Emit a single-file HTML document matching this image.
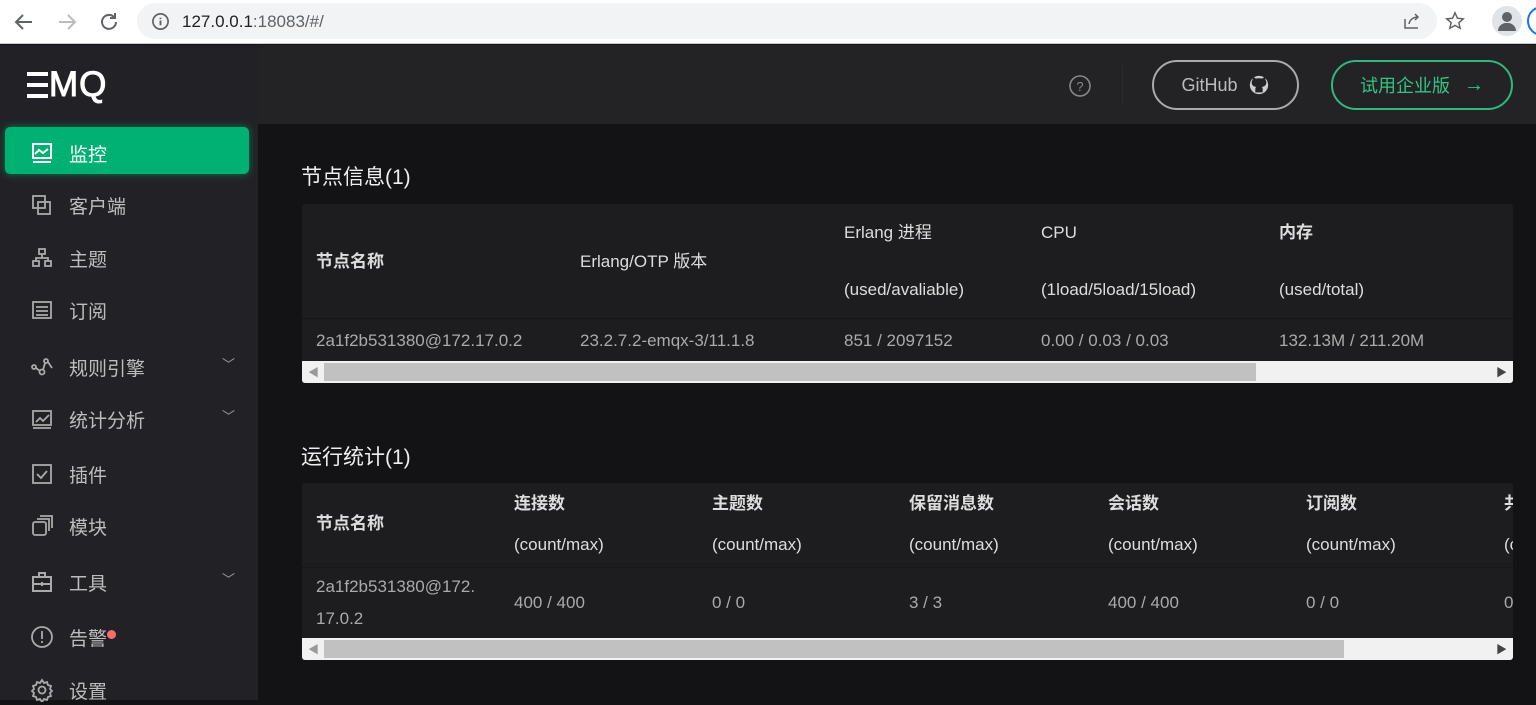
<!DOCTYPE html>
<html><head><meta charset="utf-8"><style>
*{margin:0;padding:0;box-sizing:border-box}
body{width:1536px;height:700px;overflow:hidden;background:#131315;font-family:"Liberation Sans","Noto Sans CJK SC",sans-serif;position:relative}
.chrome{position:absolute;left:0;top:0;width:1536px;height:44px;background:#fff;border-bottom:1px solid #ccc}
.url{position:absolute;left:137px;top:3px;width:1300px;height:36px;border-radius:18px;background:#f1f3f4}
.url span{position:absolute;left:45px;top:9px;font-size:17px;color:#202124}
.url span i{font-style:normal;color:#5f6368}
.side{position:absolute;left:0;top:45px;width:258px;height:655px;background:#222226}
.head{position:absolute;left:258px;top:45px;width:1278px;height:79px;background:#232326}
.item{position:absolute;left:30px;height:30px;font-size:19px;color:#bdbdbd;display:flex;align-items:center}
.item .ic{width:24px;height:24px;margin-right:15px;display:inline-block}
.item .ar{position:absolute;left:192px;top:2px;color:#999;font-size:13px}
.active{position:absolute;left:5px;top:127px;width:244px;height:47px;background:#00b173;border-radius:5px;box-shadow:0 0 8px #0a7a4f}
h3{position:absolute;left:301px;font-size:21px;font-weight:normal;color:#eee}
.tbl{position:absolute;left:302px;width:1211px;background:#1d1d1f;border-radius:3px;overflow:hidden}
.t,.th,.thn{position:absolute;font-size:17px;line-height:20px;white-space:nowrap}
.t{color:#aaa}
.th{color:#ddd;font-weight:bold}
.thn{color:#ddd}
.sb{position:absolute;left:0;width:1211px;height:22px;background:#f1f1f1}
.sb .th2{position:absolute;left:22px;top:2px;height:18px;background:#c1c1c1}
.btn{position:absolute;top:60px;height:50px;border-radius:25px;font-size:18px;display:flex;align-items:center;justify-content:center}
</style></head><body>
<div class="chrome">
<svg style="position:absolute;left:12px;top:10px" width="24" height="24" viewBox="0 0 24 24"><path d="M20 12H5M11 5l-7 7 7 7" stroke="#5f6368" stroke-width="2" fill="none"/></svg>
<svg style="position:absolute;left:55px;top:10px" width="24" height="24" viewBox="0 0 24 24"><path d="M4 12h15M13 5l7 7-7 7" stroke="#bbb" stroke-width="2" fill="none"/></svg>
<svg style="position:absolute;left:97px;top:10px" width="24" height="24" viewBox="0 0 24 24"><path d="M19 12a7 7 0 1 1-2-5M18 3v5h-5" stroke="#5f6368" stroke-width="2" fill="none"/></svg>
<div class="url"><svg style="position:absolute;left:14px;top:9px" width="19" height="19" viewBox="0 0 20 20"><circle cx="10" cy="10" r="8" stroke="#5f6368" stroke-width="1.8" fill="none"/><path d="M10 9v5M10 6v1.5" stroke="#5f6368" stroke-width="2"/></svg><span>127.0.0.1<i>:18083/#/</i></span>
<svg style="position:absolute;left:1265px;top:8px" width="20" height="20" viewBox="0 0 20 20"><path d="M3 8v9h13M7 13c1-5 5-7 9-7M13 3l3 3-3 3" stroke="#5f6368" stroke-width="1.5" fill="none"/></svg>
<svg style="position:absolute;left:1307px;top:7px" width="22" height="22" viewBox="0 0 24 24"><path d="M12 3l2.7 6 6.3.6-4.8 4.2 1.4 6.2L12 16.8 6.4 20l1.4-6.2L3 9.6 9.3 9z" stroke="#5f6368" stroke-width="1.6" fill="none"/></svg>
</div>
<div style="position:absolute;left:1492px;top:6px;width:30px;height:30px;border-radius:50%;background:#e0e3e7"><div style="position:absolute;left:10px;top:6px;width:10px;height:10px;border-radius:50%;background:#5f6368"></div><div style="position:absolute;left:6px;top:17px;width:18px;height:8px;border-radius:8px 8px 0 0;background:#5f6368"></div></div>
<div style="position:absolute;left:1527px;top:6px;width:30px;height:30px;border-radius:50%;border:2px solid #1a73e8"></div>
</div>
<div class="side"></div>
<div style="position:absolute;left:27px;top:72px;width:21px;height:26px;background:linear-gradient(#fff 0 4px,transparent 4px 11px,#fff 11px 15px,transparent 15px 22px,#fff 22px 26px)"></div>
<div style="position:absolute;left:49px;top:67px;color:#fff;font-size:35px;line-height:36px;font-weight:normal;letter-spacing:1px;-webkit-text-stroke:1px #fff">MQ</div>
<div class="active"></div>
<div class="item" style="top:138px;color:#fff"><svg class="ic" viewBox="0 0 24 24"><rect x="3" y="3" width="18" height="14" stroke="#fff" stroke-width="2" fill="none"/><path d="M5 13l4-4 4 3 5-4M3 21h18" stroke="#fff" stroke-width="2" fill="none"/></svg>监控</div>
<div class="item" style="top:190px"><svg class="ic" viewBox="0 0 24 24" fill="none" stroke="#aaa" stroke-width="1.8"><rect x="3" y="3" width="12" height="12"/><rect x="8" y="9" width="12" height="12"/></svg>客户端</div>
<div class="item" style="top:243px"><svg class="ic" viewBox="0 0 24 24" fill="none" stroke="#aaa" stroke-width="1.8"><rect x="9" y="3" width="6" height="5"/><rect x="3" y="15" width="6" height="5"/><rect x="15" y="15" width="6" height="5"/><path d="M12 8v4M6 15v-3h12v3"/></svg>主题</div>
<div class="item" style="top:295px"><svg class="ic" viewBox="0 0 24 24" fill="none" stroke="#aaa" stroke-width="1.8"><rect x="3" y="4" width="18" height="16"/><path d="M6 9h12M6 13h12M6 17h12"/></svg>订阅</div>
<div class="item" style="top:352px"><svg class="ic" viewBox="0 0 24 24" fill="none" stroke="#aaa" stroke-width="1.8"><circle cx="4" cy="12" r="2"/><circle cx="12" cy="17" r="2.5"/><circle cx="16" cy="6" r="2"/><path d="M6 13l4 3M13 15l2-7M18 7l4 6"/></svg>规则引擎<span class="ar">﹀</span></div>
<div class="item" style="top:404px"><svg class="ic" viewBox="0 0 24 24" fill="none" stroke="#aaa" stroke-width="1.8"><path d="M3 18V4h18v14zM3 21h18M6 15l4-4 3 3 6-6"/></svg>统计分析<span class="ar">﹀</span></div>
<div class="item" style="top:459px"><svg class="ic" viewBox="0 0 24 24" fill="none" stroke="#aaa" stroke-width="1.8"><rect x="3" y="3" width="18" height="18"/><path d="M7 12l4 4 6-7"/></svg>插件</div>
<div class="item" style="top:511px"><svg class="ic" viewBox="0 0 24 24" fill="none" stroke="#aaa" stroke-width="1.8"><rect x="3" y="8" width="13" height="13" rx="2"/><path d="M7 5h12v12M10 2h12v12"/></svg>模块</div>
<div class="item" style="top:567px"><svg class="ic" viewBox="0 0 24 24" fill="none" stroke="#aaa" stroke-width="2"><rect x="3" y="7" width="18" height="14"/><path d="M9 7V3h6v4M3 14h18M12 12v4"/></svg>工具<span class="ar">﹀</span></div>
<div class="item" style="top:622px"><svg class="ic" viewBox="0 0 24 24" fill="none" stroke="#aaa" stroke-width="1.8"><circle cx="12" cy="12" r="10"/><path d="M12 6v8M12 16v2"/></svg>告警<span style="width:9px;height:9px;border-radius:50%;background:#f56c6c;margin-top:-6px"></span></div>
<div class="item" style="top:675px"><svg class="ic" viewBox="0 0 24 24" fill="none" stroke="#aaa" stroke-width="1.8"><circle cx="12" cy="12" r="3.5"/><path d="M12 2l2 3 3-1 1 3 3 1-1 3 2 2-2 2 1 3-3 1-1 3-3-1-2 3-2-3-3 1-1-3-3-1 1-3-2-2 2-2-1-3 3-1 1-3 3 1z"/></svg>设置</div>
<div class="head">
<svg style="position:absolute;left:810px;top:29px" width="24" height="24" viewBox="0 0 24 24"><circle cx="12" cy="12" r="10" stroke="#888" stroke-width="1.6" fill="none"/><text x="12" y="17" font-size="13" fill="#888" text-anchor="middle" font-family="Liberation Sans">?</text></svg>
<div style="position:absolute;left:864px;top:20px;width:1px;height:40px;background:#2c2c30"></div>
</div>
<div class="btn" style="left:1152px;width:147px;border:2px solid #aaa;color:#bbb">GitHub<svg style="margin-left:10px" width="22" height="22" viewBox="0 0 24 24"><circle cx="12" cy="12" r="10" fill="#ccc"/><path d="M8 20v-4c0-1 1-2 1-2-3 0-5-2-5-5 0-1 .5-2 1-2.5 0-1 0-2 .5-3 1 0 2 .5 3 1.5 2-.5 5-.5 7 0 1-1 2-1.5 3-1.5.5 1 .5 2 .5 3 .5.5 1 1.5 1 2.5 0 3-2 5-5 5 0 0 1 1 1 2v4" fill="#232326"/></svg></div>
<div class="btn" style="left:1331px;width:182px;border:2px solid #2fb87f;color:#34c386">试用企业版<span style="margin-left:14px;font-size:20px">→</span></div>
<h3 style="top:161px">节点信息(1)</h3>
<div class="tbl" style="top:204px;height:179px">
<div style="position:absolute;left:0;top:114px;width:1211px;height:1px;background:#141416"></div>
<div class="th" style="left:14px;top:48px">节点名称</div>
<div class="thn" style="left:278px;top:48px">Erlang/OTP 版本</div>
<div class="thn" style="left:542px;top:19px">Erlang 进程</div><div class="thn" style="left:542px;top:76px">(used/avaliable)</div>
<div class="thn" style="left:739px;top:19px">CPU</div><div class="thn" style="left:739px;top:76px">(1load/5load/15load)</div>
<div class="th" style="left:977px;top:19px">内存</div><div class="thn" style="left:977px;top:76px">(used/total)</div>
<div class="t" style="left:14px;top:127px">2a1f2b531380@172.17.0.2</div>
<div class="t" style="left:278px;top:127px">23.2.7.2-emqx-3/11.1.8</div>
<div class="t" style="left:542px;top:127px">851 / 2097152</div>
<div class="t" style="left:739px;top:127px">0.00 / 0.03 / 0.03</div>
<div class="t" style="left:977px;top:127px">132.13M / 211.20M</div>
<div class="sb" style="top:157px"><span style="position:absolute;left:6px;top:3px;font-size:11px;color:#999">◀</span><div class="th2" style="width:932px"></div><span style="position:absolute;right:6px;top:3px;font-size:11px;color:#444">▶</span></div>
</div>
<h3 style="top:441px">运行统计(1)</h3>
<div class="tbl" style="top:483px;height:177px">
<div style="position:absolute;left:0;top:84px;width:1211px;height:1px;background:#161618"></div>
<div class="th" style="left:14px;top:31px">节点名称</div>
<div class="th" style="left:212px;top:11px">连接数</div><div class="thn" style="left:212px;top:52px">(count/max)</div>
<div class="th" style="left:410px;top:11px">主题数</div><div class="thn" style="left:410px;top:52px">(count/max)</div>
<div class="th" style="left:607px;top:11px">保留消息数</div><div class="thn" style="left:607px;top:52px">(count/max)</div>
<div class="th" style="left:806px;top:11px">会话数</div><div class="thn" style="left:806px;top:52px">(count/max)</div>
<div class="th" style="left:1004px;top:11px">订阅数</div><div class="thn" style="left:1004px;top:52px">(count/max)</div>
<div class="th" style="left:1202px;top:11px">共</div><div class="thn" style="left:1202px;top:52px">(c</div>
<div class="t" style="left:14px;top:94px">2a1f2b531380@172.</div>
<div class="t" style="left:14px;top:126px">17.0.2</div>
<div class="t" style="left:212px;top:110px">400 / 400</div>
<div class="t" style="left:410px;top:110px">0 / 0</div>
<div class="t" style="left:607px;top:110px">3 / 3</div>
<div class="t" style="left:806px;top:110px">400 / 400</div>
<div class="t" style="left:1004px;top:110px">0 / 0</div>
<div class="t" style="left:1202px;top:110px">0</div>
<div class="sb" style="top:155px"><span style="position:absolute;left:6px;top:3px;font-size:11px;color:#999">◀</span><div class="th2" style="width:1020px"></div><span style="position:absolute;right:6px;top:3px;font-size:11px;color:#444">▶</span></div>
</div>
</body></html>
